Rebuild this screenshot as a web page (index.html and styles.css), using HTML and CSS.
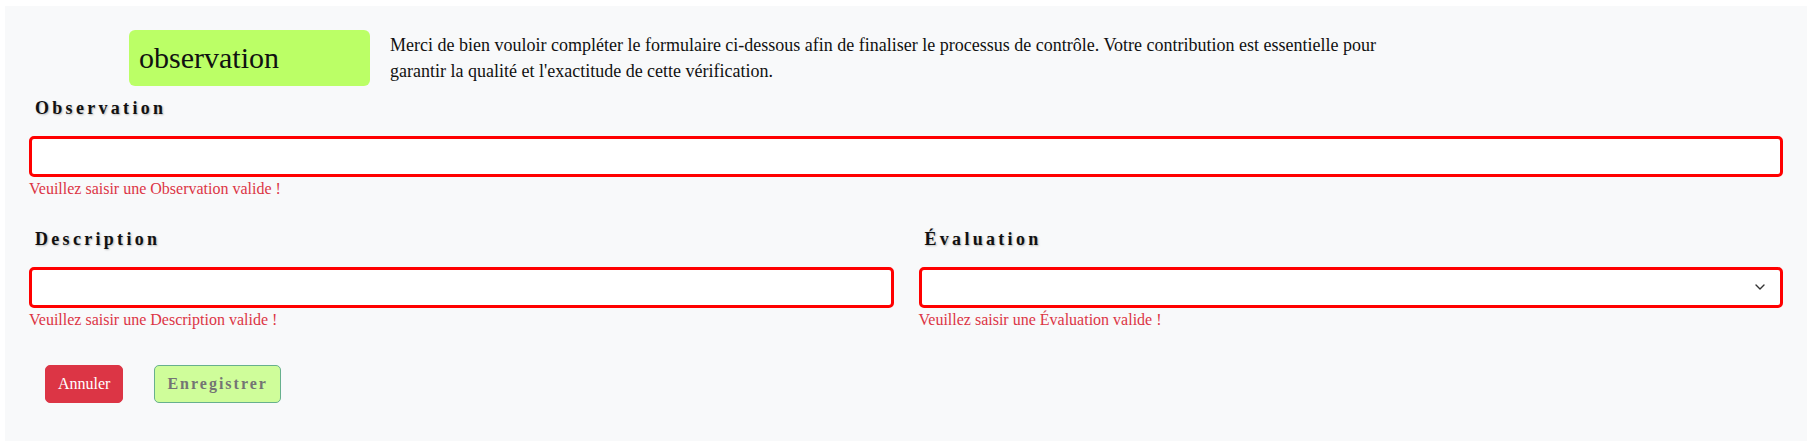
FILE: index.html
```html
<!DOCTYPE html>
<html lang="fr">
<head>
<meta charset="utf-8">
<title>Observation</title>
<link rel="stylesheet" href="styles.css">
</head>
<body>
<div class="panel">
  <div class="header">
    <div class="badge">observation</div>
    <p class="intro">Merci de bien vouloir compléter le formulaire ci-dessous afin de finaliser le processus de contrôle. Votre contribution est essentielle pour garantir la qualité et l'exactitude de cette vérification.</p>
  </div>
  <form class="form">
    <div class="field field-first">
      <label class="label" for="obs">Observation</label>
      <input class="input" id="obs" type="text">
      <div class="error">Veuillez saisir une Observation valide !</div>
    </div>
    <div class="row">
      <div class="field">
        <label class="label" for="desc">Description</label>
        <input class="input" id="desc" type="text">
        <div class="error">Veuillez saisir une Description valide !</div>
      </div>
      <div class="field">
        <label class="label" for="eval">Évaluation</label>
        <div class="select-wrap">
          <select class="input select" id="eval"><option></option></select>
          <svg class="chevron" width="10" height="6" viewBox="0 0 10 6"><polyline points="1,1 5,5 9,1" fill="none" stroke="#333" stroke-width="1.4" stroke-linecap="round" stroke-linejoin="round"/></svg>
        </div>
        <div class="error">Veuillez saisir une Évaluation valide !</div>
      </div>
    </div>
    <div class="actions">
      <button type="button" class="btn btn-cancel">Annuler</button>
      <button type="button" class="btn btn-save" disabled>Enregistrer</button>
    </div>
  </form>
</div>
</body>
</html>
```
FILE: styles.css
```css
html, body {
  margin: 0;
  padding: 0;
  background: #ffffff;
}
body {
  font-family: "Liberation Serif", "Times New Roman", serif;
  color: #111;
}
.panel {
  margin: 6px 7px 0 5px;
  background: #f8f9fa;
  padding: 24px 24px 38px 24px;
}
.header {
  display: flex;
  align-items: center;
  gap: 20px;
  padding-left: 100px;
}
.badge {
  flex: 0 0 auto;
  box-sizing: border-box;
  width: 241px;
  height: 56px;
  display: flex;
  align-items: center;
  padding: 0 10px;
  background: #bbff66;
  border-radius: 6px;
  font-size: 30px;
  color: #111;
}
.intro {
  margin: 0;
  max-width: 1010px;
  font-size: 18px;
  line-height: 26.5px;
  color: #111;
}
.form {
  margin: 0;
}
.field-first {
  margin-top: 11px;
}
.label {
  display: block;
  padding-left: 6px;
  margin-bottom: 17px;
  font-size: 18px;
  line-height: 22px;
  font-weight: bold;
  letter-spacing: 3.3px;
  color: #111;
  text-shadow: 1px 1px 2px rgba(0, 0, 0, 0.25);
}
.input {
  display: block;
  box-sizing: border-box;
  width: 100%;
  height: 41px;
  margin: 0;
  border: 3px solid #ff0000;
  border-radius: 5px;
  background: #ffffff;
  font-family: inherit;
  font-size: 16px;
  outline: none;
}
.select {
  appearance: none;
  -webkit-appearance: none;
  padding: 0 12px;
}
.select-wrap {
  position: relative;
}
.chevron {
  position: absolute;
  right: 18px;
  top: 17px;
}
.error {
  margin-top: 3px;
  font-size: 16px;
  line-height: 18px;
  color: #dc3545;
}
.row {
  margin-top: 30px;
  display: grid;
  grid-template-columns: 1fr 1fr;
  column-gap: 25px;
}
.actions {
  margin-top: 36px;
  padding-left: 16px;
  display: flex;
  gap: 31px;
}
.btn {
  box-sizing: border-box;
  height: 38px;
  padding: 6px 12px;
  font-family: "Liberation Serif", "Times New Roman", serif;
  font-size: 16px;
  line-height: 24px;
  border-radius: 5px;
  cursor: pointer;
}
.btn-cancel {
  background: #dc3545;
  border: 1px solid #dc3545;
  color: #ffffff;
}
.btn-save {
  background: #cffd9a;
  border: 1px solid #67b08e;
  color: #747474;
  font-weight: bold;
  letter-spacing: 2px;
}
```
